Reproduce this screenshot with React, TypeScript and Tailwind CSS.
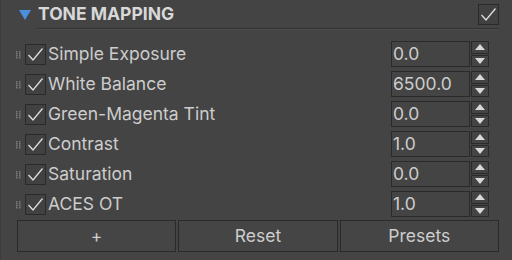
import React from "react";

const rows = [
  { label: "Simple Exposure", value: "0.0" },
  { label: "White Balance", value: "6500.0" },
  { label: "Green-Magenta Tint", value: "0.0" },
  { label: "Contrast", value: "1.0" },
  { label: "Saturation", value: "0.0" },
  { label: "ACES OT", value: "1.0" },
];

const Check = () => (
  <div className="flex items-center justify-center w-[21px] h-[21px] border border-[#2a2a2a] bg-[#414141] shrink-0">
    <svg width="17" height="15" viewBox="0 0 17 15">
      <path d="M1.5 8 L6 13 L15.5 1.5" fill="none" stroke="#dedede" strokeWidth="1.3" />
    </svg>
  </div>
);

const Handle = () => (
  <svg width="5" height="9" viewBox="0 0 5 9" className="shrink-0">
    {[0, 2, 4, 6].map((y) =>
      [0, 3].map((x) => <rect key={`${x}-${y}`} x={x} y={y + 1} width="1.5" height="1.5" fill="#7a7a7a" />)
    )}
  </svg>
);

const Spinner = () => (
  <div className="flex flex-col ml-px w-[18px] h-[26px] gap-px">
    <div className="flex-1 border border-[#2a2a2a] flex items-center justify-center">
      <svg width="10" height="6" viewBox="0 0 10 6">
        <path d="M0 6 L5 0 L10 6 Z" fill="#d8d8d8" />
      </svg>
    </div>
    <div className="flex-1 border border-[#2a2a2a] flex items-center justify-center">
      <svg width="10" height="6" viewBox="0 0 10 6">
        <path d="M0 0 L5 6 L10 0 Z" fill="#d8d8d8" />
      </svg>
    </div>
  </div>
);

export default function App() {
  return (
    <div
      className="w-[512px] h-[260px] bg-[#444444] text-[#cdcdcd] overflow-hidden border-l border-[#3c3c3c]"
      style={{ fontFamily: "Inter, 'Noto Sans', sans-serif" }}
    >
      <div className="flex items-center h-[28px] pl-[18px] pr-[13px] pt-[1px]">
        <svg width="12" height="10" viewBox="0 0 12 10" className="shrink-0">
          <path d="M0 0 L12 0 L6 10 Z" fill="#4a8ede" />
        </svg>
        <span className="ml-[7px] text-[17.5px] font-bold text-[#d8d8d8]">TONE MAPPING</span>
        <div className="ml-auto">
          <Check />
        </div>
      </div>
      <div className="ml-[35px] mr-[13px] h-[2px] border-t border-[#333333] bg-[#4c4c4c]" />
      <div className="mt-[9px] pl-[15px] pr-[23px]">
        {rows.map((r) => (
          <div key={r.label} className="flex items-center h-[30px]">
            <Handle />
            <div className="ml-[4px]">
              <Check />
            </div>
            <span className="ml-[2px] text-[17.5px]">{r.label}</span>
            <div className="ml-auto flex items-center">
              <div className="w-[79px] h-[26px] border border-[#2a2a2a] flex items-center pl-[1px] text-[17.5px]">
                {r.value}
              </div>
              <Spinner />
            </div>
          </div>
        ))}
      </div>
      <div className="mt-[1px] ml-[16px] mr-[13px] flex gap-[2px] h-[32px]">
        {["+", "Reset", "Presets"].map((b) => (
          <div
            key={b}
            className="flex-1 border border-[#2a2a2a] bg-[#454545] flex items-center justify-center text-[17.5px]"
          >
            {b}
          </div>
        ))}
      </div>
    </div>
  );
}
